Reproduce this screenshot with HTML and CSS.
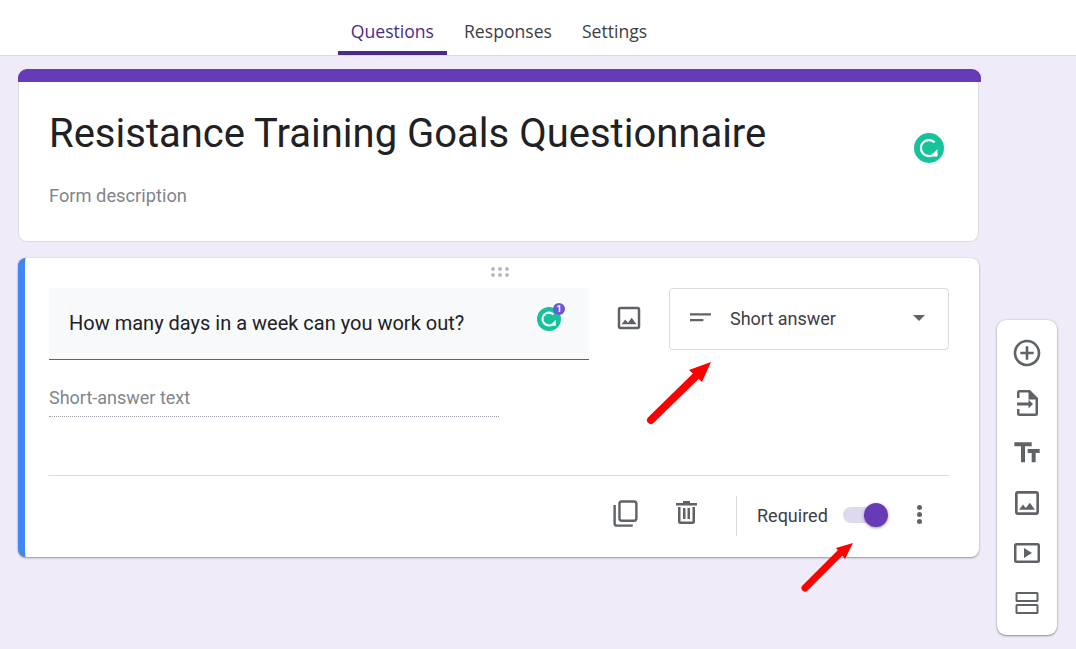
FILE: index.html
```html
<!DOCTYPE html>
<html>

<head>
    <title>Resistance Training Goals Questionnaire</title>
    <link rel="stylesheet" href="styles.css">
</head>

<body>

    <div class="tabs">
        <a class="tab tab-active">Questions</a>
        <a class="tab">Responses</a>
        <a class="tab">Settings</a>
    </div>

    <div class="page">
        <div class="column">
            <div class="title-card">
                <div class="title-bar"></div>
                <div class="title-body">
                    <div>
                        <h1>Resistance Training Goals Questionnaire</h1>
                        <p class="description">Form description</p>
                    </div>
                    <svg class="grammarly-big" viewBox="0 0 30 30">
                        <circle cx="15" cy="15" r="15" fill="#15c39a" />
                        <path d="M20.600 9.400A8 8 0 1 0 19.500 21.600" fill="none" stroke="#fff" stroke-width="2.200" />
                        <path d="M23.500 16v7.500H16z" fill="#fff" />
                    </svg>
                </div>
            </div>

            <div class="question-card">
                <div class="drag">
                    <span></span><span></span><span></span><span></span><span></span><span></span>
                </div>
                <div class="question-row">
                    <div class="question-input">
                        <span>How many days in a week can you work out?</span>
                        <div class="grammarly-small">
                            <svg viewBox="0 0 30 30">
                                <circle cx="15" cy="15" r="15" fill="#15c39a" />
                                <path d="M20.600 9.400A8 8 0 1 0 19.500 21.600" fill="none" stroke="#fff" stroke-width="2.600" />
                                <path d="M23.500 16v7.500H16z" fill="#fff" />
                            </svg>
                            <span class="badge">1</span>
                        </div>
                    </div>
                    <button class="image-btn">
                        <svg class="icon" viewBox="0 0 24 24">
                            <path d="M19 5v14H5V5h14m0-2H5c-1.100 0-2 .9-2 2v14c0 1.100.9 2 2 2h14c1.100 0 2-.9 2-2V5c0-1.100-.9-2-2-2zm-4.860 8.860l-3 3.870L9 13.140 6 17h12l-3.860-5.140z" />
                        </svg>
                    </button>
                    <div class="type-select">
                        <svg class="short-icon" viewBox="0 0 22 10">
                            <path d="M0 0h22v2.500H0zM0 6h14v2.500H0z" />
                        </svg>
                        <span class="type-label">Short answer</span>
                        <span class="caret"></span>
                    </div>
                </div>
                <div class="answer">Short-answer text</div>
                <div class="footer">
                    <svg class="icon copy-icon" viewBox="0 0 24 24">
                        <path d="M5 23a3 3 0 0 1-3-3V5h2v15a1 1 0 0 0 1 1h13v2zM9 19a3 3 0 0 1-3-3V4a3 3 0 0 1 3-3h10a3 3 0 0 1 3 3v12a3 3 0 0 1-3 3zm0-2h10a1 1 0 0 0 1-1V4a1 1 0 0 0-1-1H9a1 1 0 0 0-1 1v12a1 1 0 0 0 1 1z" />
                    </svg>
                    <svg class="icon trash-icon" viewBox="0 0 21 23">
                        <path d="M7 0h7v2h7v2.500H0V2h7zM2 6h2.500v14a.5.5 0 0 0 .5.500h11a.5.5 0 0 0 .5-.5V6H19v14.500a2.500 2.500 0 0 1-2.500 2.500h-12A2.500 2.500 0 0 1 2 20.500zM7 7h2.500v11H7zM11.500 7H14v11h-2.500z" />
                    </svg>
                    <div class="footer-line"></div>
                    <span class="required">Required</span>
                    <div class="toggle"><span class="knob"></span></div>
                    <div class="more"><span></span><span></span><span></span></div>
                </div>
            </div>
        </div>

        <div class="sidebar">
            <div class="side-item">
                <svg class="side-icon" viewBox="0 0 24 24">
                    <path d="M13 7h-2v4H7v2h4v4h2v-4h4v-2h-4V7zm-1-5C6.480 2 2 6.480 2 12s4.480 10 10 10 10-4.480 10-10S17.520 2 12 2zm0 18c-4.410 0-8-3.590-8-8s3.590-8 8-8 8 3.590 8 8-3.590 8-8 8z" />
                </svg>
            </div>
            <div class="side-item">
                <svg class="side-icon" viewBox="0 0 32 32">
                    <path d="M8.500 3H19l8 8v15.500a2.500 2.500 0 0 1-2.500 2.500h-16A2.500 2.500 0 0 1 6 26.500V22h2.500v4.500h16V12.500H17.500v-7h-9V11H6V5.500A2.500 2.500 0 0 1 8.500 3z" />
                    <path d="M6 15.500h11.500V12.500l4.500 4.500-4.500 4.500v-3H6z" />
                </svg>
            </div>
            <div class="side-item">
                <svg class="side-icon" viewBox="0 0 24 24">
                    <path d="M2.500 4v3h5v12h3V7h5V4h-13zm19 5h-9v3h3v7h3v-7h3V9z" />
                </svg>
            </div>
            <div class="side-item">
                <svg class="side-icon" viewBox="0 0 24 24">
                    <path d="M19 5v14H5V5h14m0-2H5c-1.100 0-2 .9-2 2v14c0 1.100.9 2 2 2h14c1.100 0 2-.9 2-2V5c0-1.100-.9-2-2-2zm-4.860 8.860l-3 3.870L9 13.140 6 17h12l-3.860-5.140z" />
                </svg>
            </div>
            <div class="side-item">
                <svg class="side-icon" viewBox="0 0 32 32">
                    <path d="M5.500 6h21A2.500 2.500 0 0 1 29 8.500v15a2.500 2.500 0 0 1-2.500 2.500h-21A2.500 2.500 0 0 1 3 23.500v-15A2.500 2.500 0 0 1 5.500 6zm0 2.500v15h21v-15z" />
                    <path d="M13 11l8 5-8 5z" />
                </svg>
            </div>
            <div class="side-item">
                <svg class="side-icon" viewBox="0 0 32 32">
                    <path d="M6 5h20a1.500 1.500 0 0 1 1.500 1.500v7A1.500 1.500 0 0 1 26 15H6a1.500 1.500 0 0 1-1.500-1.500v-7A1.500 1.500 0 0 1 6 5zm.5 2v6h19V7zM6 17h20a1.500 1.500 0 0 1 1.500 1.500v7A1.500 1.500 0 0 1 26 27H6a1.500 1.500 0 0 1-1.500-1.500v-7A1.500 1.500 0 0 1 6 17zm.5 2v6h19v-6z" />
                </svg>
            </div>
        </div>
    </div>

    <svg class="arrows" viewBox="0 0 1076 649">
        <path d="M651 420L697 375" stroke="#fe0000" stroke-width="8" stroke-linecap="round" />
        <path d="M711 362L689 370L702 382z" fill="#fe0000" />
        <path d="M805 588L840 553" stroke="#fe0000" stroke-width="7" stroke-linecap="round" />
        <path d="M853 543L836 548L845 559z" fill="#fe0000" />
    </svg>

</body>

</html>
```

FILE: styles.css
```css
* {
    box-sizing: border-box;
}

html,
body {
    height: 100%;
}

body {
    margin: 0;
    overflow: hidden;
    position: relative;
    background: #f0ebf8;
    color: #202124;
    font-family: Roboto, 'Liberation Sans', sans-serif;
}

.tabs {
    display: flex;
    justify-content: center;
    gap: 4px;
    height: 56px;
    padding-right: 78px;
    background: #fff;
    border-bottom: 1px solid #dadce0;
}

.tab {
    height: 55px;
    padding: 19px 13px 0;
    font-family: 'Open Sans', sans-serif;
    font-size: 17.600px;
    line-height: 24px;
    color: #3c4043;
}

.tab-active {
    color: #4b2a8a;
    border-bottom: 4px solid #4a2a8b;
    border-radius: 0 0 4px 4px / 0;
}

.page {
    display: flex;
    gap: 17px;
    padding: 13px 0 0 18px;
}

.column {
    width: 962px;
}

.title-card {
    height: 173px;
}

.title-bar {
    height: 13px;
    margin-right: -1px;
    background: #673ab7;
    border-radius: 9px 9px 0 0;
}

.title-body {
    display: flex;
    justify-content: space-between;
    height: 160px;
    margin-right: 1px;
    padding: 27px 34px 0 30px;
    background: #fff;
    border: 1px solid #dadce0;
    border-top: 0;
    border-radius: 0 0 9px 9px;
}

h1 {
    margin: 0;
    font-size: 40px;
    font-weight: 400;
    line-height: 50px;
}

.description {
    margin: 25px 0 0;
    font-size: 18.300px;
    line-height: 24px;
    color: #80868b;
}

.grammarly-big {
    width: 30px;
    height: 30px;
    margin-top: 24px;
}

.question-card {
    height: 299px;
    margin-top: 16px;
    margin-right: 1px;
    padding: 0 30px 0 24px;
    background: #fff;
    border-left: 7px solid #4285f4;
    border-radius: 8px;
    box-shadow: 0 1px 2px rgba(60, 64, 67, 0.5), 0 0 1px rgba(60, 64, 67, 0.25);
}

.drag {
    display: grid;
    grid-template-columns: repeat(3, 4px);
    gap: 2px 3px;
    justify-content: center;
    align-content: start;
    height: 30px;
    padding-top: 9px;
    padding-left: 2px;
}

.drag span {
    width: 4px;
    height: 4px;
    border-radius: 50%;
    background: #b8babd;
}

.question-row {
    display: flex;
    align-items: flex-start;
}

.question-input {
    display: flex;
    justify-content: space-between;
    width: 540px;
    height: 72px;
    padding: 22px 28px 0 20px;
    background: #f8f9fa;
    border-bottom: 1px solid #5f6368;
    font-size: 20px;
    line-height: 26px;
}

.grammarly-small {
    position: relative;
    width: 24px;
    height: 24px;
    margin-top: -3px;
}

.grammarly-small svg {
    display: block;
    width: 24px;
    height: 24px;
}

.badge {
    position: absolute;
    top: -4px;
    right: -4px;
    width: 12px;
    height: 12px;
    border-radius: 50%;
    background: #6a5ad0;
    color: #fff;
    font-size: 9px;
    font-weight: 700;
    line-height: 12px;
    text-align: center;
}

.image-btn {
    width: 80px;
    height: 60px;
    padding: 0;
    border: 0;
    background: none;
}

.icon {
    display: block;
    fill: #5f6368;
}

.image-btn .icon {
    width: 30px;
    height: 30px;
    margin: 0 auto;
}

.type-select {
    display: flex;
    align-items: center;
    width: 280px;
    height: 62px;
    padding: 0 23px 2px 20px;
    border: 1px solid #dadce0;
    border-radius: 4px;
    font-size: 18px;
    color: #3c4043;
}

.short-icon {
    width: 21px;
    height: 10px;
    fill: #5f6368;
}

.type-label {
    flex: 1;
    margin-left: 19px;
}

.caret {
    width: 0;
    height: 0;
    border-left: 6px solid transparent;
    border-right: 6px solid transparent;
    border-top: 6px solid #5f6368;
}

.answer {
    width: 450px;
    height: 58px;
    margin-top: -1px;
    padding-top: 27px;
    border-bottom: 1px dotted #9aa0a6;
    font-size: 18px;
    line-height: 24px;
    color: #80868b;
}

.footer {
    display: flex;
    align-items: center;
    height: 81px;
    margin-top: 58px;
    padding-bottom: 2px;
    border-top: 1px solid #dadce0;
}

.copy-icon {
    width: 29px;
    height: 29px;
    margin-left: 562px;
    margin-top: -3px;
}

.trash-icon {
    width: 21px;
    height: 23px;
    margin-left: 36px;
    margin-top: -5px;
}

.footer-line {
    width: 1px;
    height: 40px;
    margin-left: 39px;
    margin-top: 2px;
    background: #dadce0;
}

.required {
    margin-left: 20px;
    font-size: 18px;
    color: #3c4043;
}

.toggle {
    position: relative;
    width: 37px;
    height: 16px;
    margin-left: 15px;
    border-radius: 8px;
    background: #e0d8f0;
}

.knob {
    position: absolute;
    top: -4px;
    right: -8px;
    width: 24px;
    height: 24px;
    border-radius: 50%;
    background: #673ab7;
    box-shadow: 0 1px 3px rgba(0, 0, 0, 0.4);
}

.more {
    display: flex;
    flex-direction: column;
    gap: 2px;
    margin-left: 37px;
    margin-bottom: 2px;
}

.more span {
    width: 5px;
    height: 5px;
    border-radius: 50%;
    background: #5f6368;
}

.sidebar {
    width: 60px;
    height: 315px;
    margin-top: 251px;
    padding: 8px 0 7px;
    background: #fff;
    border-radius: 9px;
    box-shadow: 0 1px 2px rgba(60, 64, 67, 0.5), 0 0 2px rgba(60, 64, 67, 0.25);
}

.side-item {
    display: flex;
    align-items: center;
    justify-content: center;
    height: 50px;
}

.side-icon {
    width: 32px;
    height: 32px;
    fill: #5f6368;
}

.arrows {
    position: absolute;
    top: 0;
    left: 0;
    width: 1076px;
    height: 649px;
    pointer-events: none;
}
```
